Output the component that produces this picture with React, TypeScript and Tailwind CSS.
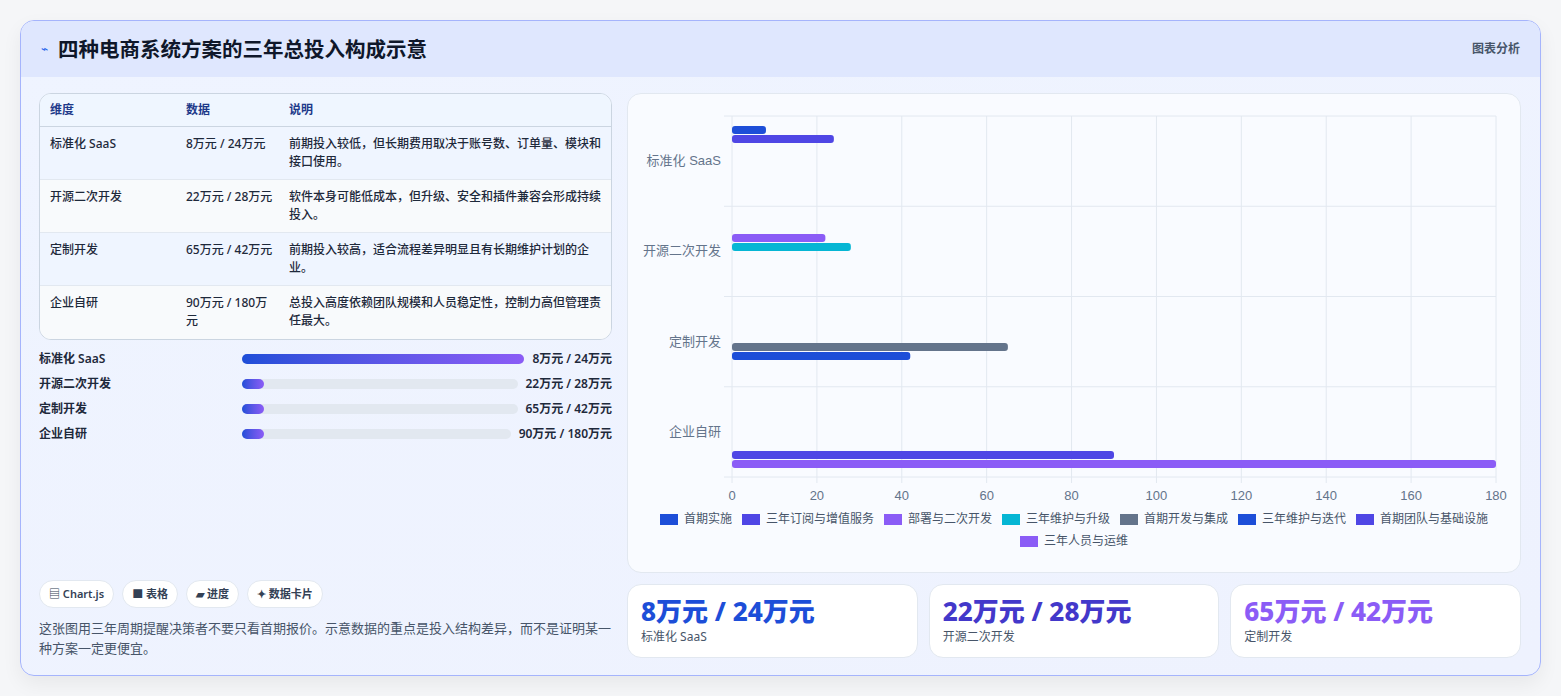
import React from "react";

const rows = [
  ["标准化 SaaS", "8万元 / 24万元", "前期投入较低，但长期费用取决于账号数、订单量、模块和接口使用。"],
  ["开源二次开发", "22万元 / 28万元", "软件本身可能低成本，但升级、安全和插件兼容会形成持续投入。"],
  ["定制开发", "65万元 / 42万元", "前期投入较高，适合流程差异明显且有长期维护计划的企业。"],
  ["企业自研", "90万元 / 180万元", "总投入高度依赖团队规模和人员稳定性，控制力高但管理责任最大。"],
];

const prog = [
  ["标准化 SaaS", "8万元 / 24万元", true],
  ["开源二次开发", "22万元 / 28万元", false],
  ["定制开发", "65万元 / 42万元", false],
  ["企业自研", "90万元 / 180万元", false],
] as const;

const legend = [
  ["#1d4ed8", "首期实施"],
  ["#4f46e5", "三年订阅与增值服务"],
  ["#8b5cf6", "部署与二次开发"],
  ["#06b6d4", "三年维护与升级"],
  ["#64748b", "首期开发与集成"],
  ["#1d4ed8", "三年维护与迭代"],
  ["#4f46e5", "首期团队与基础设施"],
  ["#8b5cf6", "三年人员与运维"],
];

function Chart() {
  const X0 = 104, X1 = 868, T = 22, B = 383;
  const sx = (v: number) => X0 + (v / 180) * (X1 - X0);
  const bars: [number, number, string][] = [
    [32, 8, "#1d4ed8"], [41, 24, "#4f46e5"],
    [140, 22, "#8b5cf6"], [149, 28, "#06b6d4"],
    [249, 65, "#64748b"], [258, 42, "#1d4ed8"],
    [357, 90, "#4f46e5"], [366, 180, "#8b5cf6"],
  ];
  const cats = ["标准化 SaaS", "开源二次开发", "定制开发", "企业自研"];
  return (
    <svg width="894" height="410" className="block" style={{ fontFamily: "'Liberation Sans','Noto Sans CJK SC',sans-serif" }}>
      {Array.from({ length: 10 }).map((_, i) => (
        <line key={i} x1={sx(i * 20)} x2={sx(i * 20)} y1={T} y2={B + 6} stroke="#e2e8f0" />
      ))}
      {[0, 1, 2, 3, 4].map((i) => (
        <line key={i} x1={X0 - 8} x2={X1} y1={T + i * 90.25} y2={T + i * 90.25} stroke="#e2e8f0" />
      ))}
      {cats.map((c, i) => (
        <text key={c} x={X0 - 11} y={T + 45 + i * 90.25 + 4} textAnchor="end" fontSize="13" fill="#64748b">{c}</text>
      ))}
      {bars.map(([y, v, c], i) => (
        <rect key={i} x={X0} y={y} width={sx(v) - X0} height={8} rx={3} fill={c} />
      ))}
      {Array.from({ length: 10 }).map((_, i) => (
        <text key={i} x={sx(i * 20)} y={406} textAnchor="middle" fontSize="13" fill="#64748b">{i * 20}</text>
      ))}
    </svg>
  );
}

export default function App() {
  return (
    <div className="w-[1561px] h-[696px] bg-[#f5f6f8] pt-[20px] px-[20px]" style={{ fontFamily: "'Noto Sans','Noto Sans CJK SC',sans-serif" }}>
      <div className="h-[656px] rounded-[14px] border border-[#a5b4fc] bg-gradient-to-br from-[#eff4ff] to-[#eef2fe] overflow-hidden shadow-[0_8px_20px_rgba(0,0,0,0.06)]">
        <div className="h-[56px] bg-[#dfe7fe] flex items-center justify-between px-[20px]">
          <div className="flex items-center gap-[10px]">
            <span className="text-[#2563eb] text-[12px]">⌁</span>
            <span className="text-[20.5px] font-bold text-[#0f172a]">四种电商系统方案的三年总投入构成示意</span>
          </div>
          <span className="text-[12px] font-semibold text-[#475569]">图表分析</span>
        </div>
        <div className="flex gap-[15px] px-[18px] pt-[16px]">
          <div className="w-[573px] h-[565px] flex flex-col">
            <div className="rounded-[12px] border border-[#cbd5e1] overflow-hidden text-[12px] bg-[#f8fafc]">
              <div className="flex h-[33px] items-center bg-[#eff6ff] border-b border-[#cbd5e1] font-semibold text-[#1e3a8a]">
                <div className="w-[146px] pl-[10px]">维度</div>
                <div className="w-[103px]">数据</div>
                <div className="flex-1">说明</div>
              </div>
              {rows.map((r, i) => (
                <div key={i} className={`flex h-[53px] pt-[8px] leading-[18px] font-medium text-[#1e293b] ${i < 3 ? "border-b border-[#e2e8f0]" : ""} ${i % 2 === 0 ? "bg-[#eff5ff]" : "bg-[#f8fafc]"}`}>
                  <div className="w-[146px] pl-[10px]">{r[0]}</div>
                  <div className="w-[103px] pr-[16px]">{r[1]}</div>
                  <div className="flex-1 pr-[8px]">{r[2]}</div>
                </div>
              ))}
            </div>
            <div className="flex flex-col gap-[7px] mt-[10px]">
              {prog.map(([l, v, full]) => (
                <div key={l} className="flex items-center h-[18px] text-[12px] font-semibold text-[#1e293b]">
                  <div className="w-[203px]">{l}</div>
                  <div className="flex-1 h-[10px] rounded-full bg-[#e2e8f0] mr-[8px]">
                    <div className={`h-full rounded-full bg-gradient-to-r from-[#1d4ed8] to-[#8b5cf6] ${full ? "w-full" : "w-[22px]"}`} />
                  </div>
                  <div>{v}</div>
                </div>
              ))}
            </div>
            <div className="flex-1" />
            <div className="flex gap-[8px]">
              {["▤ Chart.js", "■ 表格", "▰ 进度", "✦ 数据卡片"].map((t) => (
                <span key={t} className="h-[28px] px-[9px] flex items-center rounded-full bg-white border border-[#e2e8f0] text-[11px] font-semibold text-[#334155]">{t}</span>
              ))}
            </div>
            <p className="mt-[10px] text-[13px] leading-[20px] text-[#475569]">这张图用三年周期提醒决策者不要只看首期报价。示意数据的重点是投入结构差异，而不是证明某一种方案一定更便宜。</p>
          </div>
          <div className="w-[894px] flex flex-col gap-[11px]">
            <div className="h-[480px] rounded-[14px] bg-[#f9fbff] border border-[#e2e8f0]">
              <Chart />
              <div className="flex flex-wrap justify-center gap-x-[10px] gap-y-[4px] px-[20px] mt-[6px] text-[12px] text-[#475569]">
                {legend.map(([c, t]) => (
                  <span key={t} className="flex items-center gap-[6px] h-[18px]">
                    <span className="w-[18px] h-[11px]" style={{ background: c }} />
                    {t}
                  </span>
                ))}
              </div>
            </div>
            <div className="flex gap-[11px]">
              {[["8万元 / 24万元", "标准化 SaaS", "text-[#1d4ed8]"], ["22万元 / 28万元", "开源二次开发", "text-[#4338ca]"], ["65万元 / 42万元", "定制开发", "text-[#8b5cf6]"]].map(([v, l, c]) => (
                <div key={l} className="flex-1 h-[74px] rounded-[14px] bg-white border border-[#e2e8f0] px-[13px] pt-[9px]">
                  <div className={`text-[26px] font-extrabold leading-[34px] ${c}`}>{v}</div>
                  <div className="text-[12px] text-[#475569]">{l}</div>
                </div>
              ))}
            </div>
          </div>
        </div>
      </div>
    </div>
  );
}
